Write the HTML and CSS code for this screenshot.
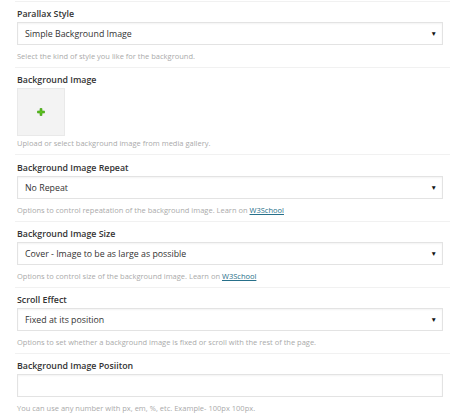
FILE: index.html
```html
<!DOCTYPE html>
<html lang="en">
<head>
    <meta charset="UTF-8">
    <meta name="viewport" content="width=device-width, initial-scale=1.0">
    <title>Parallax Options</title>
    <link rel="stylesheet" href="styles.css">
</head>
<body>
    <div class="options">
        <div class="field">
            <label class="field-label">Parallax Style</label>
            <div class="select">
                <span>Simple Background Image</span>
                <span class="arrow">&#9660;</span>
            </div>
            <p class="help">Select the kind of style you like for the background.</p>
        </div>

        <div class="field">
            <label class="field-label">Background Image</label>
            <div class="image-box">
                <svg width="8" height="8" viewBox="0 0 8 8">
                    <path d="M3 0.5h2v2.5h2.5v2h-2.5v2.5h-2v-2.5h-2.5v-2h2.5z" fill="#5cc21e" stroke="#3f9a12" stroke-width="0.6"/>
                </svg>
            </div>
            <p class="help help-tight">Upload or select background image from media gallery.</p>
        </div>

        <div class="field">
            <label class="field-label">Background Image Repeat</label>
            <div class="select">
                <span>No Repeat</span>
                <span class="arrow">&#9660;</span>
            </div>
            <p class="help">Options to control repeatation of the background image. Learn on <a href="#">W3School</a></p>
        </div>

        <div class="field">
            <label class="field-label">Background Image Size</label>
            <div class="select">
                <span>Cover - Image to be as large as possible</span>
                <span class="arrow">&#9660;</span>
            </div>
            <p class="help">Options to control size of the background image. Learn on <a href="#">W3School</a></p>
        </div>

        <div class="field">
            <label class="field-label">Scroll Effect</label>
            <div class="select">
                <span>Fixed at its position</span>
                <span class="arrow">&#9660;</span>
            </div>
            <p class="help">Options to set whether a background image is fixed or scroll with the rest of the page.</p>
        </div>

        <div class="field">
            <label class="field-label">Background Image Posiiton</label>
            <div class="select"></div>
            <p class="help">You can use any number with px, em, %, etc. Example- 100px 100px.</p>
        </div>
    </div>
</body>
</html>
```

FILE: styles.css
```css
body {
    margin: 0;
    padding: 0 0 0 15px;
    font-family: "Open Sans", Arial, sans-serif;
    background: #fff;
    color: #333;
}
.options {
    padding-top: 1px;
}
.field {
    border-top: 1px solid #f1f1f1;
    padding: 6px 7px 5px 2px;
}
.field:nth-child(3) {
    padding-top: 7px;
}
.field-label {
    display: block;
    font-size: 8.8px;
    font-weight: 600;
    line-height: 12px;
    color: #333;
    margin-bottom: 2px;
}
.select {
    display: flex;
    justify-content: space-between;
    align-items: center;
    height: 21px;
    padding: 0 5px 0 7px;
    border: 1px solid #e3e3e3;
    box-shadow: inset 0 1px 2px rgba(0, 0, 0, 0.05);
    font-size: 8.8px;
    color: #333;
}
.arrow {
    font-size: 6.5px;
    color: #111;
}
.help {
    margin: 5px 0 0;
    font-size: 7.5px;
    line-height: 12px;
    color: #aaa;
}
.help-tight {
    margin-top: 1px;
}
.help a {
    color: #27708a;
}
.image-box {
    display: flex;
    align-items: center;
    justify-content: center;
    width: 46px;
    height: 46px;
    margin-top: 1px;
    background: #f3f3f3;
    border: 1px solid #e9e9e9;
}
```
